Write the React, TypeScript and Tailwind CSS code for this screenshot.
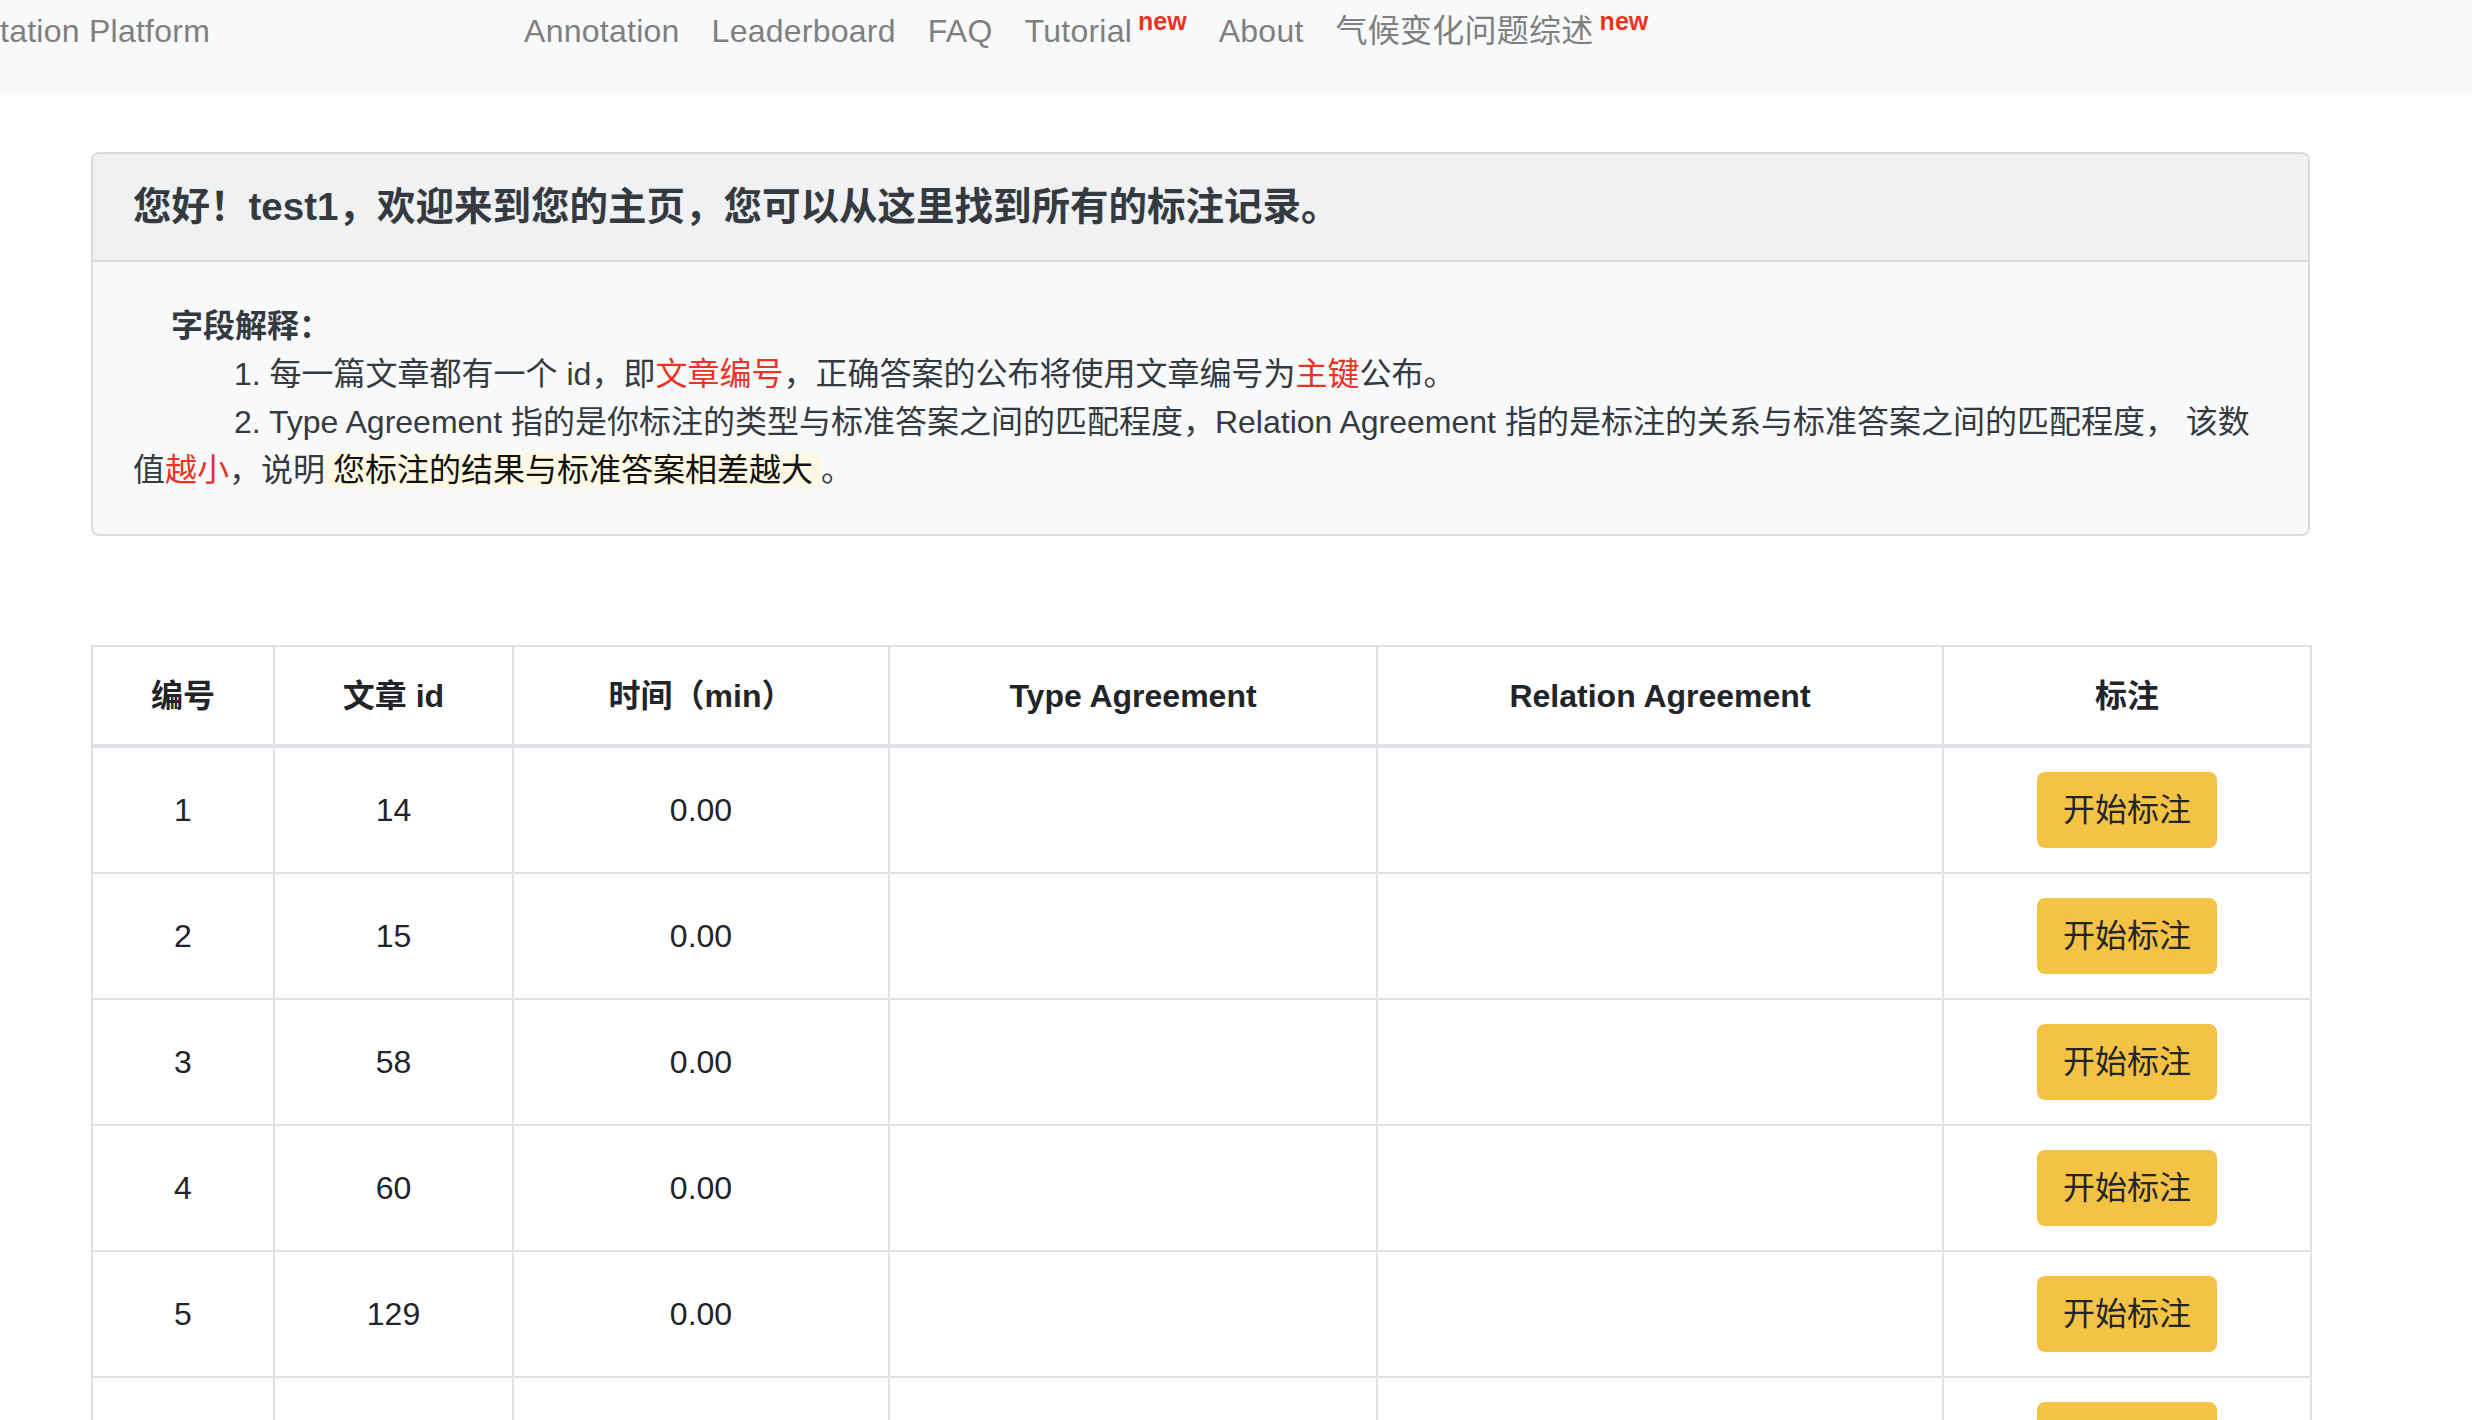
import React from "react";

type NavItem = { label: string; isNew?: boolean };

const navItems: NavItem[] = [
  { label: "Annotation" },
  { label: "Leaderboard" },
  { label: "FAQ" },
  { label: "Tutorial", isNew: true },
  { label: "About" },
  { label: "气候变化问题综述", isNew: true },
];

type Row = { no: string; articleId: string; time: string };

const rows: Row[] = [
  { no: "1", articleId: "14", time: "0.00" },
  { no: "2", articleId: "15", time: "0.00" },
  { no: "3", articleId: "58", time: "0.00" },
  { no: "4", articleId: "60", time: "0.00" },
  { no: "5", articleId: "129", time: "0.00" },
  // next row only shows its top edge in the viewport
  { no: "", articleId: "", time: "" },
];

const columns = [
  { label: "编号", width: "w-[182px]" },
  { label: "文章 id", width: "w-[239px]" },
  { label: "时间（min）", width: "w-[376px]" },
  { label: "Type Agreement", width: "w-[488px]" },
  { label: "Relation Agreement", width: "w-[566px]" },
  { label: "标注", width: "w-[368px]" },
];

const Red: React.FC<{ children: React.ReactNode }> = ({ children }) => (
  <span className="text-[#ea3323]">{children}</span>
);

const App: React.FC = () => {
  return (
    <div className="min-h-screen bg-white font-['Liberation_Sans','Noto_Sans_CJK_SC',sans-serif] text-[#212529]">
      {/* ---------- NAVBAR ---------- */}
      <nav className="h-[95px] bg-[#f8f9fa] flex items-start pt-[7px] text-[32px] leading-[48px] tracking-[0.25px] text-[#7f7f7f] whitespace-nowrap">
        <span>tation Platform</span>
        <ul className="flex ml-[298px] list-none">
          {navItems.map((item) => (
            <li key={item.label} className="px-[16px]">
              {item.label}
              {item.isNew && (
                <sup className="ml-[6px] text-[25px] font-bold tracking-normal text-[#ea3323]">new</sup>
              )}
            </li>
          ))}
        </ul>
      </nav>

      <main className="pl-[91px] pt-[57px] pb-[40px]">
        {/* ---------- CARD ---------- */}
        <div className="w-[2219px] border-2 border-[#d9dadc] rounded-[8px] bg-[#f8f9fa] overflow-hidden">
          <div className="bg-[#f0f1f3] border-b-2 border-[#d9dadc] px-[40px] py-[24px]">
            <h5 className="text-[38.5px] leading-[58px] font-semibold text-[#343a40]">
              您好！test1，欢迎来到您的主页，您可以从这里找到所有的标注记录。
            </h5>
          </div>
          <div className="p-[40px] text-[32px] leading-[48px] text-[#343a40]">
            <p className="pl-[38px] font-bold">字段解释：</p>
            <p className="indent-[101px]">
              1. 每一篇文章都有一个 id，即<Red>文章编号</Red>，正确答案的公布将使用文章编号为<Red>主键</Red>公布。
            </p>
            <p className="indent-[101px]">
              2. Type Agreement 指的是你标注的类型与标准答案之间的匹配程度，Relation Agreement
              指的是标注的关系与标准答案之间的匹配程度， 该数值<Red>越小</Red>，说明
              <mark className="bg-[#fcf8e3] px-[8px] text-[#111111]">您标注的结果与标准答案相差越大</mark>
              。
            </p>
          </div>
        </div>

        {/* ---------- TABLE ---------- */}
        <table className="mt-[109px] w-[2219px] table-fixed border-collapse text-[32px] leading-[48px] text-[#212529]">
          <thead>
            <tr>
              {columns.map((col) => (
                <th
                  key={col.label}
                  className={`${col.width} border-2 border-b-4 border-[#dee2e6] pt-[25px] pb-[24px] px-[24px] font-bold text-center`}
                >
                  {col.label}
                </th>
              ))}
            </tr>
          </thead>
          <tbody>
            {rows.map((row, i) => (
              <tr key={i}>
                <td className="border-2 border-[#dee2e6] p-[24px] text-center align-middle">{row.no}</td>
                <td className="border-2 border-[#dee2e6] p-[24px] text-center align-middle">{row.articleId}</td>
                <td className="border-2 border-[#dee2e6] p-[24px] text-center align-middle">{row.time}</td>
                <td className="border-2 border-[#dee2e6] p-[24px]"></td>
                <td className="border-2 border-[#dee2e6] p-[24px]"></td>
                <td className="border-2 border-[#dee2e6] p-[24px]">
                  <div className="flex justify-center">
                    <button className="bg-[#f4c244] border-2 border-[#f4c244] rounded-[8px] px-[24px] py-[12px] text-[32px] leading-[48px] text-[#212529]">
                      开始标注
                    </button>
                  </div>
                </td>
              </tr>
            ))}
          </tbody>
        </table>
      </main>
    </div>
  );
};

export default App;
